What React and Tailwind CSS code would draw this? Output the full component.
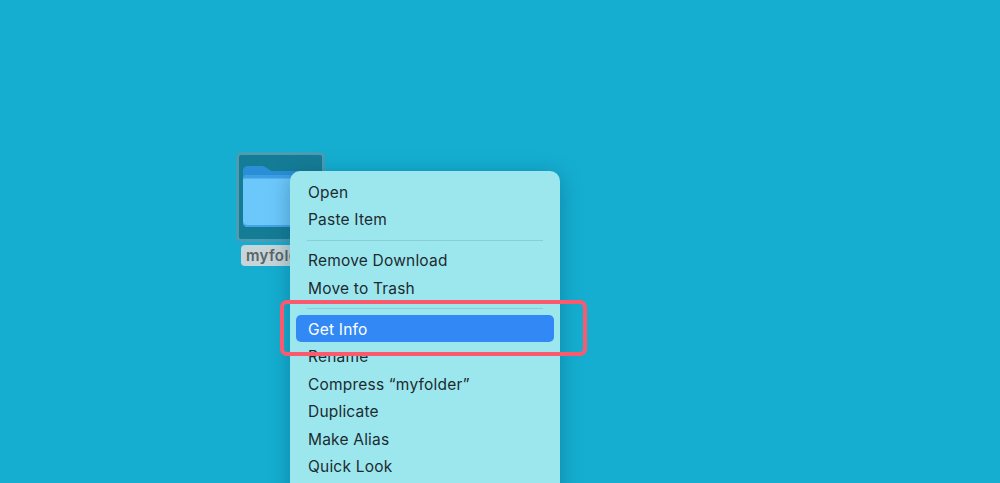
const menuGroups = [
  ['Open', 'Paste Item'],
  ['Remove Download', 'Move to Trash'],
  ['Get Info', 'Rename', 'Compress “myfolder”', 'Duplicate', 'Make Alias', 'Quick Look'],
];

function FolderIcon() {
  return (
    <svg width="78" height="64" viewBox="0 0 78 64" className="block">
      <path d="M0 6C0 3 2 1 5 1H19C23 1 25 5 29 6H70C75 6 78 9 78 13V40H0Z" fill="#2a8fd6" />
      <path d="M0 15C0 12 2 10 5 10H73C76 10 78 12 78 15V57C78 60 76 62 73 62H5C2 62 0 60 0 57Z" fill="#6cc8fb" />
      <path d="M0 13C0 11 2 10 5 10H73C76 10 78 11 78 13V13.5H0Z" fill="#3f9fe4" />
      <path d="M0 57V56C0 58 2 60 5 60H73C76 60 78 58 78 56V57C78 60 76 62 73 62H5C2 62 0 60 0 57Z" fill="#45a4e6" />
    </svg>
  );
}

export default function App() {
  return (
    <div className="relative w-[1000px] h-[483px] overflow-hidden bg-[#15aed1] font-['Inter','Liberation_Sans',sans-serif]">
      {/* desktop icon */}
      <div className="absolute left-[236px] top-[152px] w-[88px] flex flex-col items-center">
        <div className="w-[89px] h-[90px] rounded-[5px] border-[3px] border-[#4a9db5] bg-[#157c96] flex items-start pl-[4px] pt-[10px]">
          <FolderIcon />
        </div>
        <div className="mt-[3px] h-[21px] w-[78px] rounded-[4px] bg-[#c8d5d8] text-[#5a6569] text-[15px] font-semibold tracking-[0.4px] leading-[21px] text-center whitespace-nowrap overflow-hidden">
          myfolder
        </div>
      </div>

      {/* context menu */}
      <div className="absolute left-[290px] top-[171px] w-[270px] rounded-t-[10px] bg-[#9ce7ee] px-[6px] pt-[7px] pb-[30px] shadow-[0_4px_22px_rgba(0,60,90,0.35)] text-[15.5px] text-[#1d2b30] tracking-[0.2px]">
        {menuGroups.map((group, g) => (
          <div key={g}>
            {g > 0 && (
              <div className="h-[13.7px] flex items-center px-[11px] pt-[1px]">
                <div className="h-px w-full bg-[#86cfd6]" />
              </div>
            )}
            {group.map((label) => (
              <div
                key={label}
                className={
                  label === 'Get Info'
                    ? 'h-[27.4px] leading-[29px] px-[12px] rounded-[5px] bg-[#3289f6] text-white'
                    : 'h-[27.4px] leading-[29px] px-[12px]'
                }
              >
                {label}
              </div>
            ))}
          </div>
        ))}
      </div>

      {/* red callout */}
      <div className="absolute left-[280px] top-[300px] w-[307px] h-[56px] rounded-[7px] border-[4px] border-[#fb5a6e]" />
    </div>
  );
}
